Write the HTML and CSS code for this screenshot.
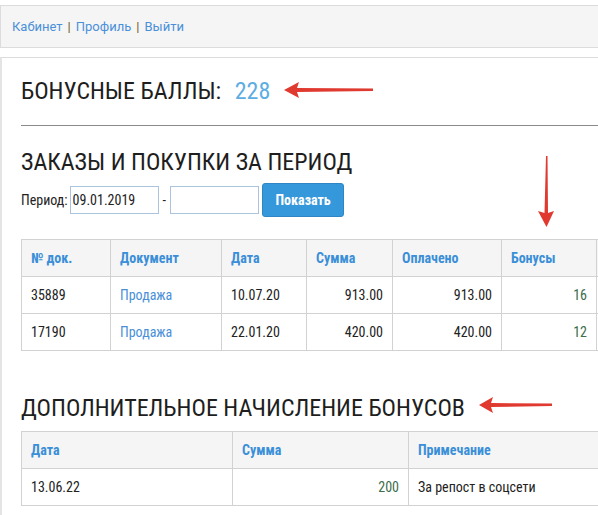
FILE: index.html
```html
<!DOCTYPE html>
<html>
<head>
<meta charset="utf-8">
<link rel="stylesheet" href="styles.css">
</head>
<body>
<div class="topbar">
  <a href="#">Кабинет</a><span class="sep">|</span><a href="#">Профиль</a><span class="sep">|</span><a href="#">Выйти</a>
</div>
<div class="panel">
  <h1 class="balance">БОНУСНЫЕ БАЛЛЫ: <span class="num">228</span></h1>
  <hr class="rule">
  <h2 class="title">ЗАКАЗЫ И ПОКУПКИ ЗА ПЕРИОД</h2>
  <form class="period">
    <label>Период:</label>
    <input class="inp" type="text" value="09.01.2019">
    <span class="dash">-</span>
    <input class="inp" type="text" value="">
    <button class="btn" type="button">Показать</button>
  </form>
  <table class="grid t1">
    <thead>
      <tr><th class="c1">№ док.</th><th class="c2">Документ</th><th class="c3">Дата</th><th class="c4">Сумма</th><th class="c5">Оплачено</th><th class="c6">Бонусы</th><th class="c7"></th></tr>
    </thead>
    <tbody>
      <tr><td>35889</td><td><a href="#">Продажа</a></td><td>10.07.20</td><td class="r">913.00</td><td class="r">913.00</td><td class="r g">16</td><td></td></tr>
      <tr><td>17190</td><td><a href="#">Продажа</a></td><td>22.01.20</td><td class="r">420.00</td><td class="r">420.00</td><td class="r g">12</td><td></td></tr>
    </tbody>
  </table>
  <h2 class="title title2">ДОПОЛНИТЕЛЬНОЕ НАЧИСЛЕНИЕ БОНУСОВ</h2>
  <table class="grid t2">
    <thead>
      <tr><th class="d1">Дата</th><th class="d2">Сумма</th><th class="d3">Примечание</th></tr>
    </thead>
    <tbody>
      <tr><td>13.06.22</td><td class="r g">200</td><td>За репост в соцсети</td></tr>
    </tbody>
  </table>
</div>

<svg class="arrow a1" width="92" height="20" viewBox="0 0 92 20">
  <path d="M1 10 L16 2 L14 8 L90 8.5 L90 11 L14 12 L16 18 Z" fill="#e0392f"/>
</svg>
<svg class="arrow a2" width="20" height="74" viewBox="0 0 20 74">
  <path d="M10 1 L11.5 1 L12 58 L18 56 L10.5 72 L2 56 L8.5 58 Z" fill="#e0392f"/>
</svg>
<svg class="arrow a3" width="76" height="20" viewBox="0 0 76 20">
  <path d="M1 10 L15 2 L13 8 L74 8.5 L74 11 L13 12 L15 18 Z" fill="#e0392f"/>
</svg>
</body>
</html>
```
FILE: styles.css
```css
html, body {
  margin: 0;
  padding: 0;
  overflow: hidden;
  background: #fff;
}
body {
  padding-top: 5px;
  font-family: "Roboto", "Liberation Sans", sans-serif;
  font-stretch: 80%;
  color: #222;
  position: relative;
  width: 640px;
}
a { color: #4a90d9; text-decoration: none; }

.topbar {
  height: 41px;
  border: 1px solid #dcdcdc;
  border-right: none;
  background: #f5f5f5;
  display: flex;
  align-items: center;
  padding-left: 11px;
  font-size: 13px;
  font-stretch: 92%;
}
.topbar .sep { color: #6b5a2a; margin: 0 5px; }

.panel {
  margin-top: 9px;
  border-top: 1px solid #dcdcdc;
  border-left: 2px solid #e4e4e4;
  padding: 0 0 20px 19px;
}
.balance {
  margin: 19px 0 0;
  font-size: 24px;
  font-weight: normal;
  line-height: 28px;
  color: #1e1e1e;
}
.balance .num { color: #5dade2; margin-left: 8px; }

.rule {
  margin: 20px 0 0;
  border: none;
  border-top: 1px solid #8a8a8a;
}
.title {
  margin: 22px 0 0;
  font-size: 24px;
  font-weight: normal;
  line-height: 28px;
  color: #1e1e1e;
}
.title2 { margin-top: 43px; }

.period {
  margin-top: 7px;
  height: 34px;
  display: flex;
  align-items: center;
  font-size: 14px;
  color: #222;
}
.period label { margin-right: 2px; }
.inp {
  width: 83px;
  height: 26px;
  border: 1px solid #a9c4dc;
  padding: 0 2px;
  margin: 0;
  font-family: inherit;
  font-stretch: inherit;
  font-size: 14px;
  color: #222;
  box-sizing: content-box;
}
.dash { margin: 0 4px; }
.btn {
  margin-left: 3px;
  width: 82px;
  height: 34px;
  background: #3498db;
  border: 1px solid #2f86c4;
  border-radius: 3px;
  color: #fff;
  font-family: inherit;
  font-stretch: inherit;
  font-weight: bold;
  font-size: 14px;
}

.grid {
  border-collapse: collapse;
  font-size: 14px;
  table-layout: fixed;
}
.t1 { margin-top: 22px; width: 640px; }
.t2 { margin-top: 9px; width: 640px; }
.grid th, .grid td {
  border: 1px solid #d2d2d2;
  height: 37px;
  padding: 0 9px;
  text-align: left;
  box-sizing: border-box;
}
.grid th {
  background: #f5f5f5;
  color: #3a8fd8;
  font-weight: bold;
}
.grid td { color: #222; }
.grid td.r { text-align: right; }
.grid td.g { color: #3b6e4a; }

.c1 { width: 89px; }
.c2 { width: 111px; }
.c3 { width: 85px; }
.c4 { width: 86px; }
.c5 { width: 109px; }
.c6 { width: 95px; }
.d1 { width: 211px; }
.d2 { width: 176px; }

.arrow { position: absolute; }
.a1 { left: 283px; top: 80px; }
.a2 { left: 536px; top: 155px; }
.a3 { left: 478px; top: 395px; }
```
